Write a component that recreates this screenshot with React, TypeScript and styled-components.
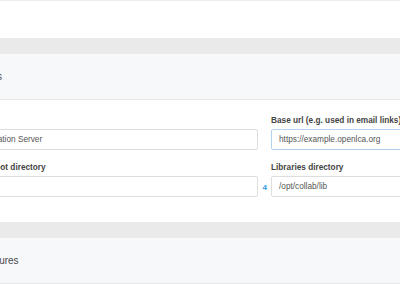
import React from "react";
import styled, { createGlobalStyle } from "styled-components";

const GlobalStyle = createGlobalStyle`
  html, body {
    margin: 0;
    padding: 0;
    background: #fff;
    overflow: hidden;
  }
  body {
    font-family: "Liberation Sans", Arial, sans-serif;
  }
`;

const Page = styled.div`
  margin-left: -61px; /* the screenshot is a crop of a wider page */
  width: 651px;
`;

const TopPanel = styled.div`
  height: 37px;
  border-top: 1px solid #ececec;
  background: #fff;
`;

const Band = styled.div`
  height: 16px;
  background: #eaeaea;
`;

const SectionHeader = styled.div`
  height: 45px;
  display: flex;
  align-items: center;
  padding-left: 4px;
  background: #f7f8fa;
  border-bottom: 1px solid #e6e7e9;
  font-size: 10px;
  color: #4a4a4a;
`;

const SectionBody = styled.div`
  display: grid;
  grid-template-columns: 1fr 1fr;
  column-gap: 13px;
  row-gap: 11px;
  padding: 14px 20px 25px;
  background: #fff;
`;

const Field = styled.div`
  position: relative;
  display: flex;
  flex-direction: column;
  gap: 2px;
`;

const Label = styled.label`
  font-size: 8.25px;
  line-height: 13px;
  font-weight: bold;
  color: #444;
`;

const Input = styled.input<{ $focused?: boolean }>`
  box-sizing: border-box;
  height: 21px;
  padding: 0 7px;
  border: 1px solid ${(p) => (p.$focused ? "#b3d3f0" : "#dedede")};
  border-radius: 2px;
  font-family: inherit;
  font-size: 8.25px;
  color: #555;
  background: #fff;
  outline: none;
`;

const Marker = styled.span`
  position: absolute;
  right: -9px;
  bottom: 5px;
  font-size: 8px;
  font-weight: bold;
  color: #2f9be0;
`;

export default function App() {
  return (
    <>
      <GlobalStyle />
      <Page>
        <TopPanel />
        <Band />
        <SectionHeader>Main settings</SectionHeader>
        <SectionBody>
          <Field>
            <Label>Name</Label>
            <Input defaultValue="Collaboration Server" />
          </Field>
          <Field>
            <Label>Base url (e.g. used in email links)</Label>
            <Input $focused defaultValue="https://example.openlca.org" />
          </Field>
          <Field>
            <Label>Storage root directory</Label>
            <Input defaultValue="" />
            <Marker>4</Marker>
          </Field>
          <Field>
            <Label>Libraries directory</Label>
            <Input defaultValue="/opt/collab/lib" />
          </Field>
        </SectionBody>
        <Band />
        <SectionHeader>Enabled features</SectionHeader>
      </Page>
    </>
  );
}
